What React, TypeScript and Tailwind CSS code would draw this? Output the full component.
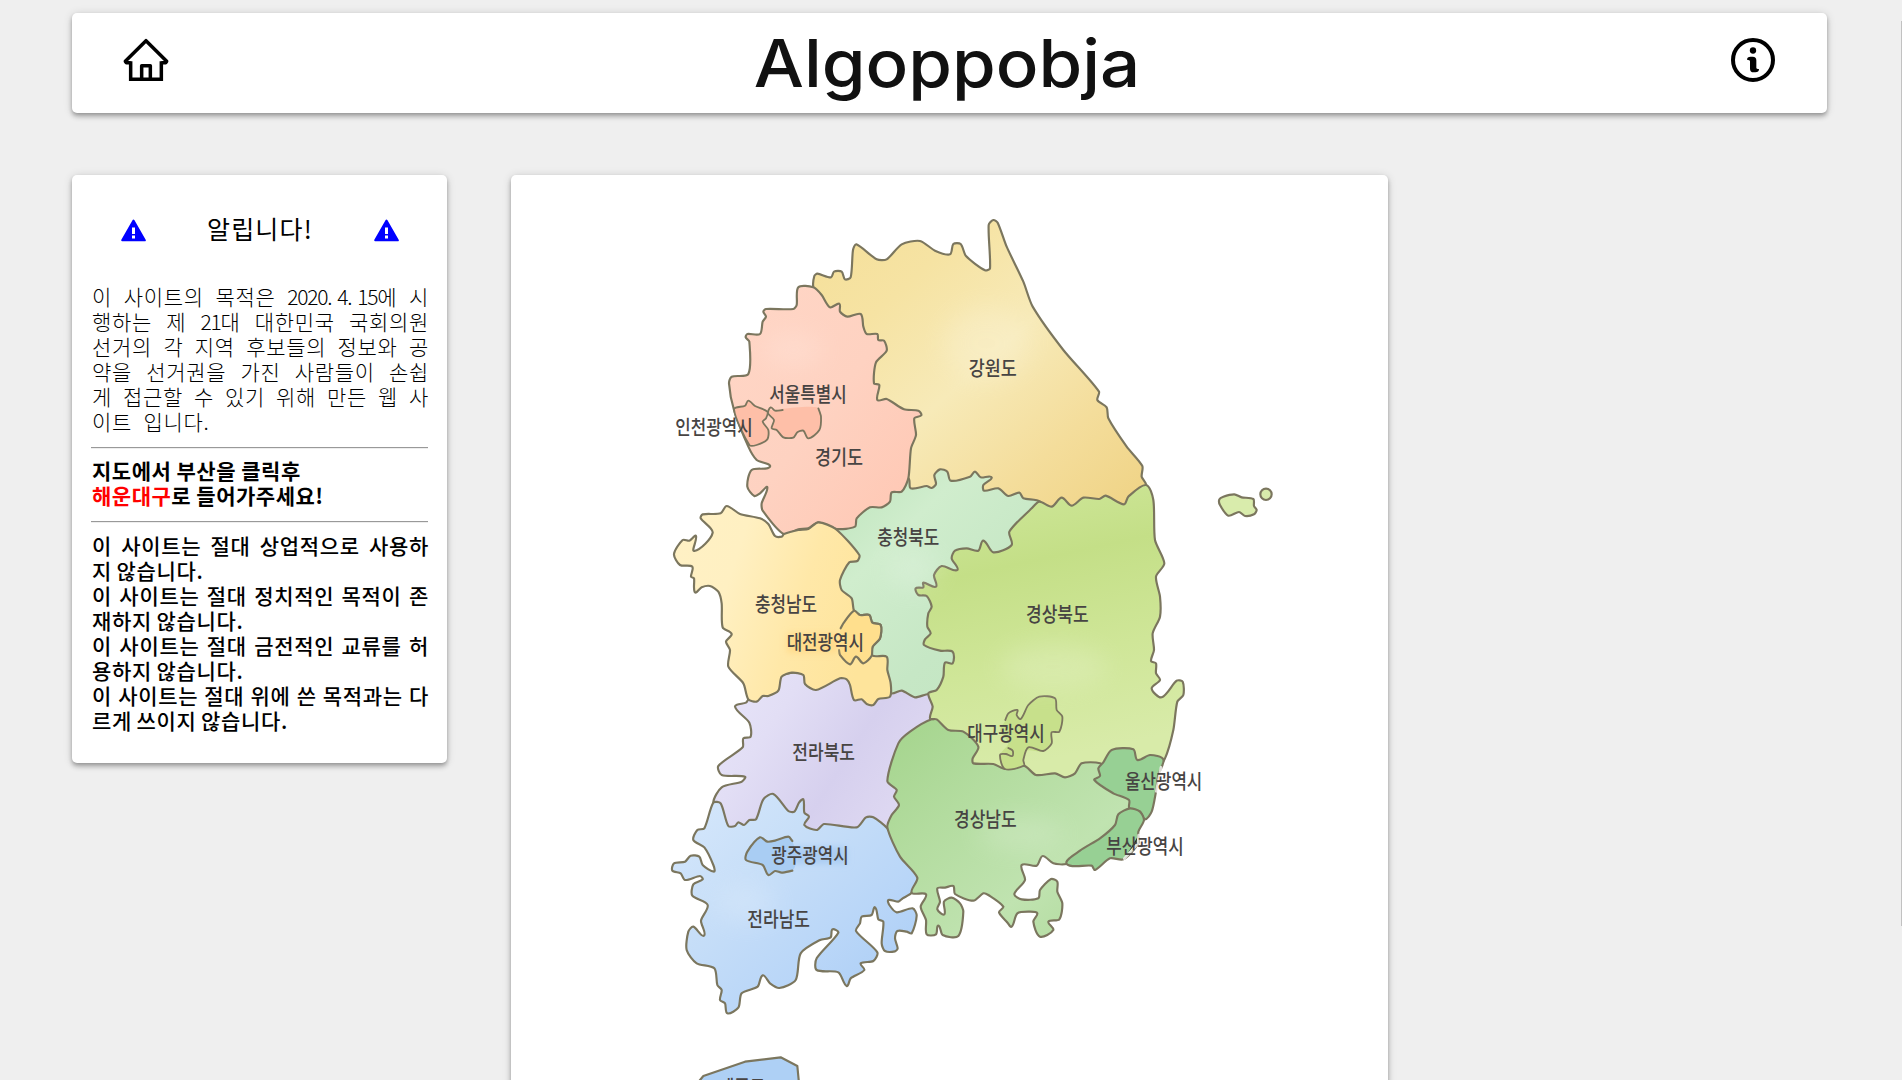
import React from "react";

type Pt = [number, number];

const parse = (s: string): Pt[] =>
  s.trim().split(/\s+/).map((p) => p.split(",").map(Number) as Pt);

/* Softly rounded curve passing through every listed point. */
function curve(s: string, closed = true): string {
  const p = parse(s);
  const n = p.length;
  const at = (i: number): Pt =>
    closed ? p[(i + n) % n] : p[Math.max(0, Math.min(n - 1, i))];
  let d = `M${p[0][0]},${p[0][1]}`;
  const last = closed ? n : n - 1;
  for (let i = 0; i < last; i++) {
    const a = at(i - 1);
    const b = at(i);
    const c = at(i + 1);
    const e = at(i + 2);
    const len = Math.hypot(c[0] - b[0], c[1] - b[1]);
    const u = Math.hypot(c[0] - a[0], c[1] - a[1]) || 1;
    const v = Math.hypot(e[0] - b[0], e[1] - b[1]) || 1;
    const k = 0.24 * len;
    d += `C${(b[0] + ((c[0] - a[0]) / u) * k).toFixed(1)},${(b[1] + ((c[1] - a[1]) / u) * k).toFixed(1)} ${(c[0] - ((e[0] - b[0]) / v) * k).toFixed(1)},${(c[1] - ((e[1] - b[1]) / v) * k).toFixed(1)} ${c[0]},${c[1]}`;
  }
  return closed ? d + "Z" : d;
}

const gangwon =
  "-260,262 -257,228 -248,221 -207,232 -198,215 -175,215 -165,238 -148,232 -141,150 -131,133 -70,178 -40,178 5,133 60,123 105,152 150,163 160,132 182,132 198,168 255,211 270,205 266,75 280,60 293,68 320,140 370,245 398,320 490,450 597,575 592,600 620,622 625,655 680,740 727,798 725,830 738,855 700,930 420,935 200,900 30,880 -60,800 -100,640 -160,420 -240,320";
const jeonbuk =
  "265,658 258,668 225,680 268,728 272,770 250,775 248,802 175,858 185,885 255,890 245,905 185,922 160,968 185,1080 480,1090 690,1060 760,950 780,850 850,750 850,680 805,600 690,600 560,560 300,600";
const chungbuk =
  "745,-5 752,25 800,18 815,24 828,12 823,-15 840,-32 862,-25 872,2 930,-10 945,-25 962,-8 995,-8 970,15 972,32 1015,25 1045,48 1078,38 1090,55 1140,65 1150,110 1100,190 1040,250 920,320 860,420 870,490 900,530 890,600 850,650 805,642 765,652 725,632 693,640 600,560 500,400 450,200 490,110 650,0";
const gyeonggi =
  "415,262 460,262 485,285 510,322 538,311 540,335 562,350 602,342 610,380 620,402 652,402 655,420 672,422 680,452 648,487 642,550 658,555 652,600 680,597 732,628 775,632 784,646 763,655 768,705 753,745 745,835 725,875 695,877 690,905 665,922 630,922 590,955 585,980 530,987 475,967 445,985 415,988 372,1003 308,932 305,910 322,862 300,880 283,888 262,860 275,810 330,800 290,780 265,740 222,630 207,550 215,530 265,522 268,425 257,412 262,402 300,402 308,365 318,350 310,335 318,327 400,327 410,315";
const chungnam =
  "122,115 128,103 182,100 200,78 240,102 300,115 325,132 345,168 365,170 372,162 415,150 445,147 475,127 527,147 598,225 592,243 568,247 540,300 545,330 575,355 582,392 600,405 628,405 637,428 662,435 660,475 638,500 638,527 680,530 682,570 692,610 690,650 655,657 640,675 620,672 605,658 582,660 570,615 560,598 540,595 468,630 435,612 430,585 395,578 365,590 355,632 325,648 308,648 290,665 265,658 250,610 205,560 210,510 198,485 215,462 188,442 185,370 175,335 150,318 125,322 105,337 102,295 93,290 97,260 60,255 42,222 68,180 88,182 108,168 103,213 158,158";
const jeonnam =
  "160,158 182,160 205,228 225,228 235,217 252,225 268,210 288,208 310,148 340,132 385,183 403,185 417,158 430,148 433,188 447,200 433,225 470,240 492,222 590,232 618,202 640,202 682,235 710,295 773,380 755,428 728,445 715,455 685,450 688,465 710,487 758,475 770,497 755,550 740,545 712,543 705,565 713,595 705,604 675,603 665,580 670,515 655,508 645,472 635,495 605,500 600,520 588,543 652,607 640,633 602,640 613,660 572,685 560,708 535,667 470,660 470,625 535,548 517,538 512,562 480,570 422,610 407,690 358,714 330,700 308,676 293,710 245,730 235,773 202,790 195,760 180,750 185,720 172,705 163,655 110,640 80,600 85,545 100,530 132,557 123,512 143,465 97,437 100,403 128,388 120,378 75,390 62,370 37,362 42,340 75,335 92,317 118,320 128,345 162,365 160,345 133,292 100,270 112,240 133,235";
const gyeongnam =
  "155,58 90,95 55,130 22,243 50,270 42,290 57,315 35,345 22,382 60,470 112,533 95,578 138,583 122,620 138,660 140,703 168,703 175,677 188,705 235,708 250,635 240,610 215,593 192,605 193,643 172,628 180,605 172,565 195,563 220,558 225,582 280,602 310,580 325,585 370,620 357,637 380,665 395,680 412,640 450,635 472,640 460,665 480,710 520,690 505,665 538,658 547,610 532,575 532,545 513,537 480,570 475,595 425,598 403,582 435,540 425,495 470,497 488,468 520,490 560,492 640,470 740,380 780,310 720,230 690,160 600,150 450,150 320,140 300,80 200,60";
const gyeongbuk =
  "418,65 455,80 485,53 515,77 550,53 598,57 617,47 672,73 685,50 738,15 760,60 765,180 793,250 768,290 780,350 780,410 758,460 762,510 753,543 768,550 768,580 780,600 755,625 785,652 830,602 848,605 850,645 832,665 820,750 795,835 760,880 640,880 600,850 545,850 525,880 495,892 465,880 408,885 372,857 315,867 280,852 220,850 218,835 235,800 190,755 145,750 110,718 90,715 98,680 85,640 110,630 130,590 135,548 158,550 158,515 120,512 72,495 75,478 92,460 82,440 85,400 95,380 80,348 55,345 47,325 70,322 70,308 108,320 102,285 125,258 172,270 155,235 165,212 200,205 235,212 250,182 280,217 335,195 328,155 395,85";
const ulsan =
  "655,205 670,187 695,150 760,148 772,180 810,165 850,178 835,225 827,280 815,335 795,358 780,335 748,325 747,300 700,280 643,240 660,228";
const busan =
  "750,325 780,335 792,360 775,395 775,430 730,478 690,475 645,510 635,497 560,492 600,452 660,415 705,375 715,343";
const daegu =
  "318,720 325,700 352,690 350,705 362,717 385,675 418,650 465,655 470,690 487,710 478,755 455,757 455,790 430,815 380,812 370,840 372,857 315,867 300,825 325,790 300,750";

const labels: [string, number, number, number][] = [
  ["강원도", 998, 507, 144],
  ["서울특별시", 444, 584, 232],
  ["인천광역시", 162, 683, 232],
  ["경기도", 537, 775, 144],
  ["충청북도", 745, 1013, 186],
  ["충청남도", 378, 1215, 186],
  ["대전광역시", 496, 1328, 232],
  ["경상북도", 1192, 1245, 188],
  ["대구광역시", 1038, 1601, 232],
  ["전라북도", 491, 1658, 188],
  ["울산광역시", 1511, 1746, 232],
  ["경상남도", 976, 1859, 188],
  ["부산광역시", 1455, 1942, 232],
  ["광주광역시", 450, 1968, 232],
  ["전라남도", 356, 2160, 188],
  ["제주도", 246, 2664, 140],
];

function Grad({ id, stops, x2 = 1, y2 = 1 }: { id: string; stops: string[]; x2?: number; y2?: number }) {
  return (
    <linearGradient id={id} x1="0" y1="0" x2={x2} y2={y2}>
      {stops.map((c, i) => (
        <stop key={i} offset={i / (stops.length - 1)} stopColor={c} />
      ))}
    </linearGradient>
  );
}

function KoreaMap() {
  return (
    <svg className="block h-[905px] w-[877px]" viewBox="-447 -75 2631 2715" strokeLinejoin="round" strokeLinecap="round">
      <defs>
        <Grad id="gw" stops={["#f5df99", "#f6e3a3", "#f7eab8", "#f4dd9b", "#efd283"]} />
        <Grad id="gg" stops={["#ffd6c6", "#fed2c1", "#ffc6b2"]} />
        <Grad id="cb" stops={["#b9e2b8", "#d0edcd", "#c6e7c5", "#c2e5c2"]} />
        <Grad id="cn" stops={["#fff1c5", "#fff0c2", "#ffe8a8", "#fee49b"]} x2={1} y2={0.3} />
        <Grad id="jb" stops={["#e9e6fa", "#e2def5", "#d6d0ee", "#dfd9f2"]} x2={1} y2={0.5} />
        <Grad id="jn" stops={["#d7e8fc", "#c8dff8", "#b9d6f8", "#a7cbf4"]} />
        <Grad id="gn" stops={["#a4d48c", "#b3dc9f", "#c0e3b0", "#add999"]} />
        <Grad id="gb" stops={["#d0e89d", "#c4df87", "#cfe698", "#d8eba9"]} x2={0.2} y2={1} />
        <filter id="soft" x="-50%" y="-50%" width="200%" height="200%">
          <feGaussianBlur stdDeviation="10" />
        </filter>
        <filter id="wash" x="-50%" y="-50%" width="200%" height="200%">
          <feGaussianBlur stdDeviation="36" />
        </filter>
      </defs>
      <g stroke="#7b765e" strokeWidth="6.5">
        <g transform="translate(720 0)">
          <path d={curve(gangwon)} fill="url(#gw)" />
        </g>
        <g transform="translate(0 840)">
          <path d={curve(jeonbuk)} fill="url(#jb)" />
          <path d={curve(chungbuk)} fill="url(#cb)" />
        </g>
        <path d={curve(gyeonggi)} fill="url(#gg)" />
        <path d={curve("330,642 325,630 345,632 370,626 470,622 483,650 478,690 445,715 430,692 412,697 400,713 370,712 350,690 335,685 342,660")} fill="#febfa8" stroke="none" />
        <path d={curve("368,630 345,632 332,622 324,640 342,660 335,685 350,690 370,712 400,713 412,697 430,692 445,715 478,690 483,650 475,625", false)} fill="none" strokeWidth="5.5" />
        <path d={curve("222,628 255,617 265,602 285,618 322,635 318,655 308,665 325,690 322,718 290,735 268,735")} fill="#febfa8" strokeWidth="5.5" />
        <g transform="translate(0 840)">
          <path d={curve(chungnam)} fill="url(#cn)" />
          <path d={curve("582,392 600,405 628,405 637,428 662,435 660,475 638,500 635,527 610,550 588,530 570,553 540,525 538,500 545,435")} fill="#ffdf8d" stroke="none" />
          <path d={curve("542,445 550,430 582,392 600,405 628,405 637,428 662,435 660,475 638,500 635,527 610,550 588,530 570,553 540,525 537,510", false)} fill="none" />
          <rect x="382" y="460" width="150" height="58" fill="#ffdc8c" stroke="none" filter="url(#soft)" />
        </g>
        <g transform="translate(0 1650)">
          <path d={curve(jeonnam)} fill="url(#jn)" />
          <path d={curve("258,320 262,305 300,262 322,275 345,270 385,260 397,273 410,320 397,362 340,365 325,375 308,345 258,330")} fill="#a9cdf3" stroke="none" />
          <path d={curve("397,273 385,260 345,272 322,275 300,262 262,305 258,330 308,345 325,375 345,363 365,368 397,362", false)} fill="none" />
          <rect x="400" y="290" width="160" height="52" fill="#abcdf3" stroke="none" filter="url(#soft)" />
          <path d="M112,1000 L130,978 L255,935 L362,922 L412,948 L418,1010 Z" fill="#aed0f5" />
        </g>
        <g transform="translate(660 1500)">
          <path d={curve(gyeongnam)} fill="url(#gn)" />
        </g>
        <g transform="translate(720 840)">
          <path d={curve(gyeongbuk)} fill="url(#gb)" />
          <path d={curve(daegu)} fill="#c7e08b" stroke="none" />
          <path d={curve("316,720 325,700 352,690 350,705 362,717 385,675 418,650 465,655 470,690 487,710 478,755 455,757 455,790 430,813 385,802 370,840 372,857 315,867 300,825 318,822 337,828 338,812 325,804", false)} fill="none" strokeWidth="5.5" />
          <path d={curve("960,75 958,58 970,50 1003,43 1025,52 1060,57 1062,78 1070,90 1062,103 1035,108 1017,96 985,107")} fill="#d9ecac" />
          <circle cx="1098" cy="43" r="17" fill="#d9ecac" />
        </g>
        <g transform="translate(660 1500)">
          <path d={curve(ulsan)} fill="#97d094" />
          <path d={curve(busan)} fill="#97d094" />
          <path d="M843,202 L829,274 M776,405 L774,430 L733,476" stroke="#ffffff" strokeWidth="8" opacity="0.75" />
        </g>
      </g>
      <g fill="#ffffff" opacity="0.16" filter="url(#wash)">
        <ellipse cx="980" cy="430" rx="130" ry="110" />
        <ellipse cx="400" cy="450" rx="90" ry="50" />
        <ellipse cx="760" cy="1110" rx="80" ry="60" />
        <ellipse cx="1180" cy="1400" rx="160" ry="70" />
        <ellipse cx="1080" cy="1900" rx="130" ry="50" />
        <ellipse cx="260" cy="2110" rx="90" ry="60" />
      </g>
      <g
        className="font-['Noto_Sans_CJK_KR',sans-serif] text-[62px] font-medium"
        fill="#474443"
        textAnchor="middle"
      >
        {labels.map(([name, x, y, w]) => (
          <text key={name} x={x} y={y + 21} textLength={w} lengthAdjust="spacingAndGlyphs">
            {name}
          </text>
        ))}
      </g>
    </svg>
  );
}

function HomeIcon() {
  return (
    <svg className="h-[44px] w-[46px]" viewBox="189 114 138 132" fill="none" stroke="#000" strokeWidth="10.500">
      <path d="M212,184 V238 H304 V184" />
      <path d="M212,188 H199 L196,184 L258,122 L320,184 L317,188 H304" strokeLinejoin="round" />
      <path d="M245,238 V197 H271 V238" strokeLinejoin="round" />
    </svg>
  );
}

function InfoIcon() {
  return (
    <svg className="h-[44px] w-[44px]" viewBox="213 114 132 132">
      <circle cx="279" cy="180" r="60" fill="none" stroke="#000" strokeWidth="12" />
      <circle cx="279" cy="151.500" r="9.500" />
      <path d="M261,179 Q261,170 272,170 H278 Q289,170 289,181 V203 Q289,208 297,207 Q297,217 286,217 H281 Q270,217 270,206 V184 Q270,179 261,179Z" />
    </svg>
  );
}

function WarningIcon() {
  return (
    <svg className="h-[23px] w-[25px]" viewBox="0 0 25 23">
      <path d="M12.500,1.500 L23.800,21.300 H1.200 Z" fill="#00f" stroke="#00f" strokeWidth="2" strokeLinejoin="round" />
      <path d="M11,8.500 h3 v6.500 h-3z M11,16.500 h3 v3 h-3z" fill="#fff" />
    </svg>
  );
}

const card =
  "rounded-[5px] bg-white shadow-[0_2px_4px_-1px_rgba(0,0,0,0.25),0_4px_5px_0_rgba(0,0,0,0.16),0_1px_10px_0_rgba(0,0,0,0.14)]";

function Num({ children }: { children: string }) {
  return (
    <span className="tracking-[-1.7px]">
      {children.split("").map((c, i) => (
        <span key={i} className="inline-block w-[10px] text-center">
          {c}
        </span>
      ))}
    </span>
  );
}

/* Set width lines; the ones flagged true are stretched to both margins. */
const purpose: [React.ReactNode, boolean][] = [
  [<>이 사이트의 목적은 <Num>2020.4.15</Num>에 시</>, true],
  [<>행하는 제 <Num>21</Num>대 대한민국 국회의원</>, true],
  ["선거의 각 지역 후보들의 정보와 공", true],
  ["약을 선거권을 가진 사람들이 손쉽", true],
  ["게 접근할 수 있기 위해 만든 웹 사", true],
  [<span className="[word-spacing:6px]">이트 입니다.</span>, false],
];
const promises: [string, boolean][] = [
  ["이 사이트는 절대 상업적으로 사용하", true],
  ["지 않습니다.", false],
  ["이 사이트는 절대 정치적인 목적이 존", true],
  ["재하지 않습니다.", false],
  ["이 사이트는 절대 금전적인 교류를 허", true],
  ["용하지 않습니다.", false],
  ["이 사이트는 절대 위에 쓴 목적과는 다", true],
  ["르게 쓰이지 않습니다.", false],
];

function Lines({ rows }: { rows: [React.ReactNode, boolean][] }) {
  return (
    <>
      {rows.map(([text, full], i) => (
        <div
          key={i}
          className={
            full
              ? "-mr-px h-[25px] whitespace-nowrap [text-align-last:justify]"
              : "h-[25px] whitespace-nowrap [word-spacing:-1px]"
          }
        >
          {text}
        </div>
      ))}
    </>
  );
}

export default function App() {
  return (
    <div className="relative h-screen overflow-hidden bg-[#efefef] px-[72px] pt-[13px] font-['Noto_Sans_CJK_KR',sans-serif] text-black">
      <header className={`${card} flex h-[100px] w-[1755px] items-center justify-between pr-[52px] pl-[51px]`}>
        <div className="-mt-1.5">
          <HomeIcon />
        </div>
        <h1 className="-ml-1.5 w-[382px] origin-center scale-x-[1.072] text-center font-['Inter',sans-serif] text-[66px] leading-[98px] font-medium whitespace-nowrap text-[#111]">
          Algoppobja
        </h1>
        <div className="-mt-1.5">
          <InfoIcon />
        </div>
      </header>

      <main className="mt-[62px] flex items-start gap-16">
        <aside className={`${card} h-[588px] w-[375px] px-[19px] pt-[39px] text-[21px] leading-[25px] tracking-[0.700px]`}>
          <div className="flex h-[32px] items-center justify-between pr-[29px] pl-[30px]">
            <WarningIcon />
            <h2 className="-mt-1 text-[25px] leading-[30px] tracking-[1.200px]">알립니다!</h2>
            <WarningIcon />
          </div>
          <div className="mt-[38px] pl-px font-light">
            <Lines rows={purpose} />
          </div>
          <hr className="mt-[13px] border-t-[1px] border-b-[1px] border-t-[#999] border-b-[#eee]" />
          <div className="mt-[9px] h-[50px] pl-px text-[21px] font-bold tracking-[0.500px] whitespace-nowrap">
            지도에서 부산을 클릭후
            <br />
            <span className="text-[#f00]">해운대구</span>로 들어가주세요!
          </div>
          <hr className="mt-[13px] border-t-[1px] border-b-[1px] border-t-[#999] border-b-[#eee]" />
          <div className="mt-[10px] pl-px font-medium">
            <Lines rows={promises} />
          </div>
        </aside>
        <section className={`${card} h-[1100px] w-[877px]`}>
          <KoreaMap />
        </section>
      </main>

      <div className="absolute top-[21px] right-0 h-[905px] w-px bg-[#c1c1c1]" />
    </div>
  );
}
